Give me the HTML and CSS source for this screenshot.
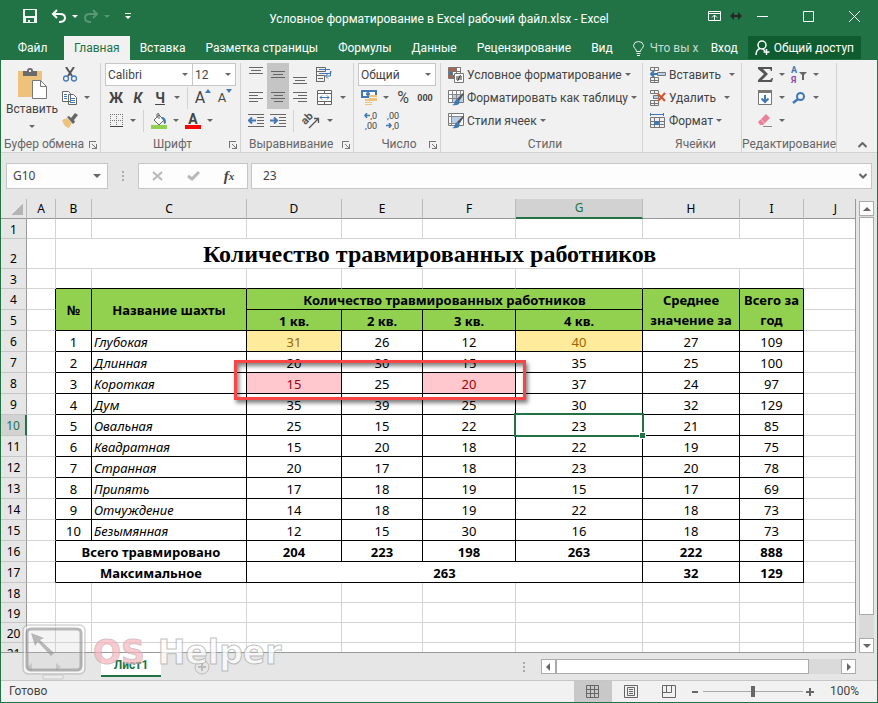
FILE: index.html
```html
<!DOCTYPE html>
<html lang="ru">
  <head>
    <meta charset="utf-8" />
    <title>Условное форматирование в Excel рабочий файл.xlsx - Excel</title>
    <link rel="stylesheet" href="styles.css">
  </head>
  <body>
    <div class="window">
      <header class="titlebar">
        <div class="quick">
          <button aria-label="Сохранить"><svg width="14" height="14"><path d="M0 0h14v14H0zM2 1v6h10V1zM3 9v4h2v-2h2v2h4V9z" fill="#f4f8f5" fill-rule="evenodd"/></svg></button>
          <button aria-label="Отменить"><svg width="16" height="14" fill="none" stroke="#fff" stroke-width="2"><path d="M2 5h7q5 0 5 4t-6 4M6 1L2 5l4 4"/></svg></button>
          <button class="arrow light" aria-label="Список отмены"></button>
          <button class="faded" aria-label="Вернуть"><svg width="16" height="14" fill="none" stroke="#fff" stroke-width="2"><path d="M14 5H7Q2 5 2 9t6 4M10 1l4 4-4 4"/></svg></button>
          <button class="arrow light faded" aria-label="Список возврата"></button>
          <button class="custom" aria-label="Настройка"><svg width="6" height="7" fill="#fff"><path d="M0 0h6v1H0zM0 3h6L3 6z"/></svg></button>
        </div>
        <h1>Условное форматирование в Excel рабочий файл.xlsx - Excel</h1>
        <div class="controls">
          <button class="small" aria-label="Параметры ленты"><svg width="13" height="10" fill="none" stroke="#fff"><path d="M.5.5h12v9H.5zM1 2.5h11M6.500 9V4M4 6.500L6.500 4 9 6.500"/></svg></button>
          <svg class="resize" width="12" height="8" fill="#262626"><path d="M0 4l4-4v3h4V0l4 4-4 4V5H4v3z"/></svg>
          <button aria-label="Свернуть"><svg width="11" height="11" stroke="#fff"><path d="M0 5.500h11"/></svg></button>
          <button aria-label="Развернуть"><svg width="11" height="11" stroke="#fff" fill="none"><path d="M.5.5h10v10H.5z"/></svg></button>
          <button aria-label="Закрыть"><svg width="11" height="11" stroke="#fff"><path d="M0 0l11 11M11 0L0 11"/></svg></button>
        </div>
      </header>

      <nav class="tabs">
        <a href="#file" class="file">Файл</a>
        <a href="#home" class="active">Главная</a>
        <a href="#insert">Вставка</a>
        <a href="#layout">Разметка страницы</a>
        <a href="#formulas">Формулы</a>
        <a href="#data">Данные</a>
        <a href="#review">Рецензирование</a>
        <a href="#view">Вид</a>
        <a href="#tell" class="tell"><svg width="11" height="15" fill="none" stroke="#e6f0ea"><path d="M3.500 10.500Q3.500 9 2 7.500Q.5 6 .5 4.500Q1 .5 5.500.5t5 4q0 1.500-1.500 3T7.500 10.500zM3.500 12.500h4M4 14.500h3"/></svg><span>Что вы х</span></a>
        <a href="#login" class="login">Вход</a>
        <button class="share"><svg width="15" height="16" fill="none" stroke="#fff" stroke-width="1.500"><circle cx="7" cy="5" r="4"/><path d="M1 15q0-5 4-6.500M8 9l2 2M11.500 9v6M8.500 12h6"/></svg>Общий доступ</button>
      </nav>

      <div class="ribbon">
        <section class="group clipboard">
          <div class="group-body">
            <button class="paste">
              <svg width="29" height="31"><path d="M0 3h24v26H0z" fill="#edc37c"/><path d="M5 3h4q0-3 3-3t3 3h4v5H5z" fill="#6b6b6b"/><path d="M11 2h2v2h-2z" fill="#f0f0f0"/><path d="M14.500 12.500h8l6 6v12h-14z" fill="#fff" stroke="#777"/><path d="M22.500 12.500v6h6" fill="none" stroke="#777"/></svg>
              Вставить
              <span class="arrow"></span>
            </button>
            <div class="rows">
              <div class="row"><button class="tool" aria-label="Вырезать"><svg width="14" height="15" fill="none"><path d="M3 0l6 9M11 0L5 9" stroke="#555" stroke-width="2"/><circle cx="3" cy="11.500" r="2.500" stroke="#3f78b5" stroke-width="1.300"/><circle cx="11" cy="11.500" r="2.500" stroke="#3f78b5" stroke-width="1.300"/></svg></button></div>
              <div class="row"><button class="tool" aria-label="Копировать"><svg width="16" height="14" fill="#fff" stroke="#666"><path d="M.5.5h6l2 2v8h-8zM6.500 3.500h5l3 3v7h-8z"/><path d="M2 3.500h3M2 5.500h3M2 7.500h3M8 7.500h5M8 9.500h5M8 11.500h5" stroke="#3f78b5"/></svg></button><button class="arrow" aria-label="Ещё"></button></div>
              <div class="row"><button class="tool" aria-label="Формат по образцу"><svg width="16" height="15"><path d="M0 7l5-2 5 5-3 5q-5-1-7-8z" fill="#edc37c"/><path d="M5 4l2-1 2 2 4-5 3 2-4 5 1 2-2 2z" fill="#666"/></svg></button></div>
            </div>
          </div>
          <footer>Буфер обмена<button class="launch" aria-label="Параметры буфера"></button></footer>
        </section>

        <section class="group font">
          <div class="group-body rows">
            <div class="row">
              <label class="combo wide"><select aria-label="Шрифт"><option>Calibri</option></select></label>
              <label class="combo size"><select aria-label="Размер шрифта"><option>12</option></select></label>
            </div>
            <div class="row">
              <button class="tool bold">Ж</button>
              <button class="tool bold italic">К</button>
              <button class="tool bold under">Ч</button>
              <button class="arrow" aria-label="Подчёркивание"></button>
              <i class="split"></i>
              <button class="tool grow">A<svg width="6" height="4"><path d="M0 4l3-4 3 4z" fill="#3f78b5"/></svg></button>
              <button class="tool shrink">A<svg width="6" height="4"><path d="M0 0h6L3 4z" fill="#3f78b5"/></svg></button>
            </div>
            <div class="row">
              <button class="tool" aria-label="Границы"><svg width="13" height="13" fill="none" stroke="#777" stroke-dasharray="1 1"><path d="M.5 0v12M6.500 0v12M12.500 0v12M0 .5h13M0 6.500h13"/><path d="M0 12.500h13" stroke="#444" stroke-dasharray="none"/></svg></button>
              <button class="arrow" aria-label="Виды границ"></button>
              <i class="split"></i>
              <button class="tool" aria-label="Цвет заливки"><svg width="16" height="16"><path d="M3 7l5-5 5 5-5 5z" fill="#fff" stroke="#666"/><path d="M6 5V1q1-1 2 0v5" fill="none" stroke="#666"/><path d="M11 4q4 0 4 6l-2 1q0-4-3-6z" fill="#3f78b5"/><path d="M0 12h16v4H0z" fill="#92d050"/></svg></button>
              <button class="arrow" aria-label="Цвета заливки"></button>
              <button class="tool color">А</button>
              <button class="arrow" aria-label="Цвета шрифта"></button>
            </div>
          </div>
          <footer>Шрифт<button class="launch" aria-label="Параметры шрифта"></button></footer>
        </section>

        <section class="group align">
          <div class="group-body rows">
            <div class="row">
              <button class="tool top" aria-label="По верхнему краю"><svg width="14" height="7" stroke="#666"><path d="M0 .5h14M2 3.500h10M0 6.500h14"/></svg></button>
              <button class="tool pressed" aria-label="По середине"><svg width="14" height="7" stroke="#666"><path d="M0 .5h14M2 3.500h10M0 6.500h14"/></svg></button>
              <button class="tool bottom" aria-label="По нижнему краю"><svg width="14" height="7" stroke="#666"><path d="M0 .5h14M2 3.500h10M0 6.500h14"/></svg></button>
              <button class="tool" aria-label="Перенос текста"><svg width="16" height="16" fill="none" stroke="#666"><path d="M.5 0v15M.5.5h9v4h-9M.5 8.500h8v6h-8M2 11.500h5"/><path d="M3 2.500h11M3 6.500h10q2.500 0 2-2.500M14.500 4v5h-5M12 6.500L9.500 9 12 11.500" stroke="#3f78b5"/></svg></button>
            </div>
            <div class="row">
              <button class="tool" aria-label="По левому краю"><svg width="14" height="12" stroke="#666"><path d="M0 .5h14M0 3.500h9M0 6.500h14M0 9.500h9"/></svg></button>
              <button class="tool pressed" aria-label="По центру"><svg width="14" height="12" stroke="#666"><path d="M0 .5h14M3 3.500h9M0 6.500h14M3 9.500h9"/></svg></button>
              <button class="tool" aria-label="По правому краю"><svg width="14" height="12" stroke="#666"><path d="M0 .5h14M5 3.500h9M0 6.500h14M5 9.500h9"/></svg></button>
              <button class="tool" aria-label="Объединить ячейки"><svg width="15" height="15" fill="#fff" stroke="#666"><path d="M.5.5h14v14H.5zM.5 3.500h14M.5 11.500h14M7.500 0v3M7.500 12v3"/><path d="M3 7.500h9M5 5.500l-2 2 2 2M10 5.500l2 2-2 2" stroke="#3f78b5" fill="none"/></svg></button>
              <button class="arrow" aria-label="Виды объединения"></button>
            </div>
            <div class="row">
              <button class="tool" aria-label="Уменьшить отступ"><svg width="16" height="13" stroke="#666"><path d="M0 .5h16M9 3.500h7M9 6.500h7M9 9.500h7M0 12.500h16"/><path d="M1 6.500h7M4 3.500l-3 3 3 3" stroke="#3f78b5" stroke-width="2" fill="none"/></svg></button>
              <button class="tool" aria-label="Увеличить отступ"><svg width="16" height="13" stroke="#666"><path d="M0 .5h16M9 3.500h7M9 6.500h7M9 9.500h7M0 12.500h16"/><path d="M0 6.500h7M4 3.500l3 3-3 3" stroke="#3f78b5" stroke-width="2" fill="none"/></svg></button>
              <i class="split"></i>
              <button class="tool" aria-label="Ориентация"><svg class="loose" width="17" height="16"><text class="ab" x="0" y="9" transform="rotate(-45 5 8)">ab</text><path d="M6 15l9-9M11 5.500h4.500V10" fill="none" stroke="#555" stroke-width="1.300"/></svg></button>
              <button class="arrow" aria-label="Виды ориентации"></button>
            </div>
          </div>
          <footer>Выравнивание<button class="launch" aria-label="Параметры выравнивания"></button></footer>
        </section>

        <section class="group number">
          <div class="group-body rows">
            <div class="row"><label class="combo format"><select aria-label="Числовой формат"><option>Общий</option></select></label></div>
            <div class="row">
              <button class="tool" aria-label="Финансовый формат"><svg width="17" height="16"><path d="M0 0h16v8H0z" fill="#3f78b5"/><path d="M2 2h12v4H2z" fill="#fff"/><circle cx="7" cy="4" r="2" fill="#3f78b5"/><path d="M8 5h8v6H8zM4 9h7v6H4z" fill="#edc37c"/><path d="M8 7.500h8M4 11.500h7M4 13.500h7" stroke="#f0f0f0"/></svg></button>
              <button class="arrow" aria-label="Валюты"></button>
              <button class="tool percent">%</button>
              <button class="tool zeros">000</button>
            </div>
            <div class="row digits">
              <button class="tool decimals"><span><svg width="6" height="5"><path d="M6 2.500H1M3 0L1 2.500 3 5" stroke="#3f78b5" fill="none" stroke-width="1.500"/></svg>,0</span><span>,00</span></button>
              <button class="tool decimals"><span>,00</span><span><svg width="6" height="5"><path d="M0 2.500h5M3 0l2 2.500L3 5" stroke="#3f78b5" fill="none" stroke-width="1.500"/></svg>,0</span></button>
            </div>
          </div>
          <footer>Число<button class="launch" aria-label="Параметры числа"></button></footer>
        </section>

        <section class="group styles">
          <div class="group-body rows">
            <div class="row"><button class="command"><svg width="16" height="16" stroke="#777"><path d="M.5.5h12v11H.5z" fill="#fff"/><path d="M1 1h7v3H1z" fill="#d35230" stroke="none"/><path d="M1 4h4v4H1z" fill="#3f78b5" stroke="none"/><path d="M1 8h5v3H1z" fill="#d35230" stroke="none"/><path d="M4.500 0v11M8.500 0v6M0 4.500h12"/><path d="M6.500 6.500h9v9h-9z" fill="#fff"/><path d="M8 10h6M8 12h6M12.500 8l-3 6" stroke="#333"/></svg>Условное форматирование<span class="arrow"></span></button></div>
            <div class="row"><button class="command"><svg width="16" height="16"><path d="M.5.5h15v12H.5z" fill="#fff" stroke="#777"/><path d="M4 4h11v8H4z" fill="#b9cfe8"/><path d="M4.500 0v13M8.500 0v13M12.500 0v7M0 4.500h15M0 8.500h13" stroke="#888"/><path d="M16 4l-5 7-2-2 6-6z" fill="#555"/><path d="M9 9q4 1 2 5-3 2-7 1 3-1 3-4z" fill="#3f78b5"/></svg>Форматировать как таблицу<span class="arrow"></span></button></div>
            <div class="row"><button class="command"><svg width="16" height="16"><path d="M.5.5h15v12H.5z" fill="#fff" stroke="#777"/><path d="M4 4h9v6H4z" fill="#b9cfe8"/><path d="M3.500 0v13M0 3.500h15M0 10.500h8" stroke="#888"/><path d="M16 4l-5 7-2-2 6-6z" fill="#555"/><path d="M9 9q4 1 2 5-3 2-7 1 3-1 3-4z" fill="#3f78b5"/></svg>Стили ячеек<span class="arrow"></span></button></div>
          </div>
          <footer>Стили</footer>
        </section>

        <section class="group cells">
          <div class="group-body rows">
            <div class="row"><button class="command"><svg width="16" height="16" fill="none" stroke="#777"><path d="M.5.500h8v3h-8zM4.500.5v3M.5 10.500h8v5h-8zM4.500 10v5M.5 13.500h8"/><path d="M7.500 5.500h8v3h-8z" fill="#b9cfe8"/><path d="M8 7H1M4 4L1 7l3 3" stroke="#3f78b5" stroke-width="2"/></svg>Вставить</button><button class="arrow far" aria-label="Варианты вставки"></button></div>
            <div class="row"><button class="command"><svg width="16" height="16" fill="none" stroke="#777"><path d="M.5.500h8v3h-8zM4.500.5v3M.5 10.500h8v5h-8zM4.500 10v5M.5 13.500h8"/><path d="M3.500 5.500h5v3h-5z" fill="#b9cfe8"/><path d="M8 4l7 7M15 3l-7 8" stroke="#d35230" stroke-width="2"/></svg>Удалить</button><button class="arrow far" aria-label="Варианты удаления"></button></div>
            <div class="row"><button class="command"><svg width="16" height="16" fill="none" stroke="#777"><path d="M.5 4.500h14v10H.5zM4.500 4v11M9.500 4v11M0 8.500h15M0 11.500h15"/><path d="M4 8h5v4H4z" fill="#3f78b5" stroke="none"/><path d="M1 1.500h12M.5 0v3M13.500 0v3" stroke="#3f78b5"/></svg>Формат<span class="arrow"></span></button></div>
          </div>
          <footer>Ячейки</footer>
        </section>

        <section class="group editing">
          <div class="group-body rows">
            <div class="row">
              <button class="tool" aria-label="Сумма"><svg width="15" height="15"><path d="M0 0h14v4h-1l-1-2H5l5 5-6 6h8l2-2h1l-1 4H0v-2l6-6-6-5z" fill="#555"/></svg></button><button class="arrow" aria-label="Функции"></button>
              <button class="tool" aria-label="Сортировка"><svg class="loose" width="16" height="17"><text class="az" x="0" y="7" fill="#3f78b5">А</text><text class="az" x="0" y="17" fill="#8a4fa8">Я</text><path d="M8 6h8l-3 3v5h-2V9z" fill="#666"/></svg></button><button class="arrow" aria-label="Виды сортировки"></button>
            </div>
            <div class="row">
              <button class="tool" aria-label="Заполнить"><svg width="15" height="15"><path d="M.5.5h13v14H.5z" fill="#fff" stroke="#777"/><path d="M0 0h14v3H0z" fill="#777"/><path d="M7 5v7M3.500 8.500L7 12l3.500-3.500" stroke="#3f78b5" stroke-width="2" fill="none"/></svg></button><button class="arrow" aria-label="Виды заполнения"></button>
              <button class="tool" aria-label="Найти"><svg width="14" height="12" fill="none" stroke="#3f78b5"><circle cx="8.500" cy="4.500" r="3.500" stroke-width="2"/><path d="M6 7l-5 4" stroke-width="2.500"/></svg></button><button class="arrow" aria-label="Виды поиска"></button>
            </div>
            <div class="row">
              <button class="tool" aria-label="Очистить"><svg width="15" height="13"><path d="M8 0l4 4-7 7H2L0 8z" fill="#e8829a"/><path d="M3 5l4 5" stroke="#f5c4ce"/><path d="M5 12.500h9" stroke="#888"/></svg></button><button class="arrow" aria-label="Виды очистки"></button>
            </div>
          </div>
          <footer>Редактирование</footer>
        </section>
        <button class="collapse" aria-label="Свернуть ленту"><svg width="9" height="6" fill="none" stroke="#666" stroke-width="2"><path d="M.5 5l4-4 4 4"/></svg></button>
      </div>

      <div class="formula-bar">
        <label class="name-box"><input type="text" value="G10" aria-label="Имя ячейки" /><span class="arrow"></span></label>
        <span class="grip"></span>
        <div class="fx">
          <button aria-label="Отмена"><svg width="11" height="10" stroke="#b8b8b8" stroke-width="2"><path d="M1 1l9 8M10 1L1 9"/></svg></button>
          <button aria-label="Ввод"><svg width="13" height="10" fill="none" stroke="#b8b8b8" stroke-width="3"><path d="M1 5l4 3 7-7"/></svg></button>
          <button class="fn">f<sub>x</sub></button>
        </div>
        <label class="formula"><input type="text" value="23" aria-label="Строка формул" /><svg width="8" height="6" fill="none" stroke="#666" stroke-width="2"><path d="M.5 1L4 4.500 7.500 1"/></svg></label>
      </div>

      <main class="workspace">
        <div class="sheet">
          <table>
            <colgroup><col class="c-row"><col class="c-a"><col class="c-b"><col class="c-c"><col class="c-d"><col class="c-e"><col class="c-f"><col class="c-g"><col class="c-h"><col class="c-i"><col></colgroup>
            <thead>
              <tr><th class="corner"></th><th>A</th><th>B</th><th>C</th><th>D</th><th>E</th><th>F</th><th class="current">G</th><th>H</th><th>I</th><th>J</th></tr>
            </thead>
            <tbody>
              <tr class="low"><th>1</th><td></td><td></td><td></td><td></td><td></td><td></td><td></td><td></td><td></td><td></td></tr>
              <tr class="title"><th>2</th><td></td><td colspan="8">Количество травмированных работников</td><td></td></tr>
              <tr class="low above"><th>3</th><td></td><td></td><td></td><td></td><td></td><td></td><td></td><td></td><td></td><td></td></tr>
            </tbody>
            <tbody class="data">
              <tr class="head"><th>4</th><td></td><td rowspan="2">№</td><td rowspan="2">Название шахты</td><td colspan="4">Количество травмированных работников</td><td rowspan="2">Среднее значение за</td><td rowspan="2">Всего за год</td><td></td></tr>
              <tr class="head"><th>5</th><td></td><td>1 кв.</td><td>2 кв.</td><td>3 кв.</td><td>4 кв.</td><td></td></tr>
              <tr><th>6</th><td></td><td>1</td><td class="name">Глубокая</td><td class="warn">31</td><td>26</td><td>12</td><td class="warn">40</td><td>27</td><td>109</td><td></td></tr>
              <tr><th>7</th><td></td><td>2</td><td class="name">Длинная</td><td>20</td><td>30</td><td>15</td><td>35</td><td>25</td><td>100</td><td></td></tr>
              <tr><th>8</th><td></td><td>3</td><td class="name">Короткая</td><td class="bad">15</td><td>25</td><td class="bad">20</td><td>37</td><td>24</td><td>97</td><td></td></tr>
              <tr><th>9</th><td></td><td>4</td><td class="name">Дум</td><td>35</td><td>39</td><td>25</td><td>30</td><td>32</td><td>129</td><td></td></tr>
              <tr><th class="current">10</th><td></td><td>5</td><td class="name">Овальная</td><td>25</td><td>15</td><td>22</td><td class="selected">23</td><td>21</td><td>85</td><td></td></tr>
              <tr><th>11</th><td></td><td>6</td><td class="name">Квадратная</td><td>15</td><td>20</td><td>18</td><td>22</td><td>19</td><td>75</td><td></td></tr>
              <tr><th>12</th><td></td><td>7</td><td class="name">Странная</td><td>20</td><td>17</td><td>18</td><td>23</td><td>20</td><td>78</td><td></td></tr>
              <tr><th>13</th><td></td><td>8</td><td class="name">Припять</td><td>17</td><td>18</td><td>19</td><td>15</td><td>17</td><td>69</td><td></td></tr>
              <tr><th>14</th><td></td><td>9</td><td class="name">Отчуждение</td><td>14</td><td>18</td><td>19</td><td>22</td><td>18</td><td>73</td><td></td></tr>
              <tr><th>15</th><td></td><td>10</td><td class="name">Безымянная</td><td>12</td><td>15</td><td>30</td><td>16</td><td>18</td><td>73</td><td></td></tr>
              <tr class="total"><th>16</th><td></td><td colspan="2">Всего травмировано</td><td>204</td><td>223</td><td>198</td><td>263</td><td>222</td><td>888</td><td></td></tr>
              <tr class="total"><th>17</th><td></td><td colspan="2">Максимальное</td><td colspan="4">263</td><td>32</td><td>129</td><td></td></tr>
            </tbody>
            <tbody>
              <tr class="low"><th>18</th><td></td><td></td><td></td><td></td><td></td><td></td><td></td><td></td><td></td><td></td></tr>
              <tr class="low"><th>19</th><td></td><td></td><td></td><td></td><td></td><td></td><td></td><td></td><td></td><td></td></tr>
              <tr class="low"><th>20</th><td></td><td></td><td></td><td></td><td></td><td></td><td></td><td></td><td></td><td></td></tr>
              <tr class="low"><th>21</th><td></td><td></td><td></td><td></td><td></td><td></td><td></td><td></td><td></td><td></td></tr>
            </tbody>
          </table>
          <div class="callout"></div>
        </div>
        <div class="vscroll">
          <button class="step up" aria-label="Вверх"></button>
          <div class="thumb"></div>
          <button class="step down" aria-label="Вниз"></button>
        </div>
      </main>

      <div class="sheet-bar">
        <button class="nav" aria-label="Предыдущий лист"><svg width="5" height="8" fill="#c6c6c6"><path d="M5 0v8L0 4z"/></svg></button>
        <button class="nav" aria-label="Следующий лист"><svg width="5" height="8" fill="#c6c6c6"><path d="M0 0v8l5-4z"/></svg></button>
        <a href="#sheet1" class="sheet-tab">Лист1</a>
        <button class="add" aria-label="Новый лист"><svg width="16" height="16" fill="none" stroke="#bbb"><circle cx="8" cy="8" r="7"/><path d="M4 8h8M8 4v8" stroke-width="2"/></svg></button>
        <span class="grip"></span>
        <div class="hscroll">
          <button class="step left" aria-label="Влево"></button>
          <div class="thumb"></div>
          <button class="step right" aria-label="Вправо"></button>
        </div>
      </div>

      <footer class="status">
        <span class="ready">Готово</span>
        <button class="view on" aria-label="Обычный"><svg width="13" height="13" fill="none" stroke="#666"><path d="M.5.5h12v12H.5zM4.500 0v13M8.500 0v13M0 4.500h13M0 8.500h13"/></svg></button>
        <button class="view" aria-label="Разметка страницы"><svg width="14" height="13" fill="none" stroke="#666"><path d="M.5.5h13v12H.5zM3.500 2.500h7v8h-7zM5 4.500h4M5 6.500h4M5 8.500h4"/></svg></button>
        <button class="view" aria-label="Страничный режим"><svg width="14" height="13" fill="none" stroke="#666"><path d="M.5.5h13v12H.5zM4.500 0v7.500M9.500 0v7.500M0 7.500h9.500"/></svg></button>
        <button class="zoom-step" aria-label="Уменьшить"><svg width="8" height="8" stroke="#666" stroke-width="2"><path d="M1 4h6"/></svg></button>
        <input type="range" min="0" max="100" value="50" aria-label="Масштаб" />
        <button class="zoom-step" aria-label="Увеличить"><svg width="8" height="8" stroke="#666" stroke-width="2"><path d="M0 4h8M4 0v8"/></svg></button>
        <span class="percent-value">100%</span>
      </footer>

      <div class="watermark">
        <svg width="66" height="58" fill="none"><rect x="2" y="2" width="62" height="49" rx="5" fill="#ccc" fill-opacity=".3" stroke="#aaa"/><rect x="4" y="4" width="58" height="45" rx="4" stroke="#fff" stroke-width="2"/><rect x="6" y="6" width="54" height="41" rx="4" stroke="#999" stroke-width="3"/><path d="M10 10l13 5-4 2 14 13-3 3-13-14-3 4z" fill="#999"/><path d="M22 52h20v4H22z" fill="#eee" stroke="#bbb"/></svg>
        <span class="os">OS</span><span class="helper">Helper</span>
      </div>
    </div>
  </body>
</html>
```
FILE: styles.css
```css
* {
  box-sizing: border-box;
}
body {
  margin: 0;
  font-family: Roboto, "Noto Sans", sans-serif;
  font-size: 12px;
  line-height: 16px;
  color: #444;
}
button,
input,
select {
  font: inherit;
  color: inherit;
  background: none;
  border: none;
  border-radius: 0;
  padding: 0;
  margin: 0;
}
button {
  display: flex;
  align-items: center;
  justify-content: center;
  white-space: nowrap;
}
a {
  color: inherit;
  text-decoration: none;
}
svg {
  display: block;
  flex: none;
}
.loose {
  overflow: visible;
}
.window {
  position: relative;
  display: flex;
  flex-direction: column;
  height: 100vh;
  border: 1px solid #217346;
  border-top: none;
  background: #e6e6e6;
  overflow: hidden;
}

/* title bar */
.titlebar {
  display: grid;
  grid-template-columns: 1fr auto 1fr;
  height: 36px;
  background: #217346;
  color: #fff;
}
.titlebar h1 {
  margin: 0;
  padding-top: 3px;
  font-size: 12px;
  font-weight: normal;
  line-height: 33px;
  white-space: nowrap;
}
.quick {
  display: flex;
  align-items: center;
  padding-left: 22px;
  padding-bottom: 4px;
}
.quick button:nth-child(2) {
  margin-left: 14px;
}
.quick .custom {
  margin-left: 10px;
  width: 6px;
}
.faded {
  opacity: 0.25;
}
.controls {
  display: flex;
  justify-content: flex-end;
  padding-bottom: 4px;
}
.controls button {
  width: 46px;
}
.controls .small {
  width: 22px;
}
.resize {
  align-self: center;
  margin: 0 -3px 0 5px;
}

/* drop-down triangle */
.arrow {
  width: 16px;
  height: 16px;
  flex: none;
  display: flex;
  align-items: center;
  justify-content: center;
}
.arrow::after,
.combo::after {
  content: "";
  border: 3px solid transparent;
  border-top-color: #666;
  border-bottom: none;
}
.arrow.light::after {
  border-top-color: #fff;
}

.tabs {
  display: flex;
  height: 24px;
  background: #217346;
  color: #fff;
  line-height: 24px;
  white-space: nowrap;
  padding-right: 16px;
}
.tabs a {
  flex: none;
  padding: 0 10px;
}
.tabs .file {
  width: 63px;
  padding: 0;
  text-align: center;
}
.tabs .active {
  background: #f1f1f1;
  color: #217346;
}
.tabs .tell {
  display: flex;
  gap: 6px;
  flex: 1;
  align-items: center;
  padding-right: 0;
  color: #c7dccf;
}
.tabs .share {
  gap: 4px;
  padding: 0 7px;
  height: 23px;
  background: #0e5c2f;
}

/* ribbon */
.ribbon {
  display: flex;
  height: 93px;
  padding-top: 3px;
  background: #f1f1f1;
  border-bottom: 1px solid #d2d2d2;
}
.group {
  border-right: 1px solid #d2d2d2;
}
.group-body {
  height: 72px;
}
.group footer {
  display: flex;
  justify-content: center;
  align-items: center;
  height: 17px;
  position: relative;
  color: #666;
  white-space: nowrap;
}
.launch {
  position: absolute;
  right: 4px;
  bottom: 4px;
  width: 7px;
  height: 7px;
  border: 1px solid #777;
  border-right: none;
  border-bottom: none;
}
.launch::after {
  content: "";
  width: 4px;
  height: 4px;
  flex: none;
  margin: 3px 0 0 3px;
  border: 1px solid #777;
  border-left: none;
  border-top: none;
  background: linear-gradient(45deg, transparent 40%, #777 40% 60%, transparent 60%);
}
.row {
  display: flex;
  align-items: center;
  height: 23px;
}
.tool {
  width: 22px;
  height: 23px;
  flex: none;
}
.row .arrow {
  width: 12px;
}
.split {
  width: 1px;
  height: 22px;
  margin: 0 4px;
  background: #d2d2d2;
}
.command {
  gap: 3px;
}
.command .arrow {
  width: 6px;
}
.clipboard {
  width: 100px;
}
.clipboard .group-body {
  display: flex;
}
.clipboard footer {
  justify-content: flex-start;
  padding-left: 3px;
}
.paste {
  width: 58px;
  flex-direction: column;
  justify-content: flex-start;
  padding: 5px 0 0 4px;
  gap: 1px;
}
.paste svg {
  margin-bottom: 1px;
}
.font {
  width: 140px;
  padding-left: 4px;
}
.combo {
  position: relative;
  display: block;
  height: 23px;
  border: 1px solid #c6c6c6;
  background: #fff;
}
.combo select {
  width: 100%;
  height: 21px;
  padding-left: 2px;
  appearance: none;
}
.combo::after {
  position: absolute;
  right: 4px;
  top: 9px;
}
.wide {
  width: 88px;
}
.size {
  width: 43px;
  border-left: none;
}
.format {
  width: 78px;
}
.bold {
  font-weight: bold;
  font-size: 14px;
}
.italic {
  font-style: italic;
}
.under {
  text-decoration: underline;
}
.grow,
.shrink {
  font-size: 16px;
}
.shrink {
  font-size: 13px;
}
.grow svg,
.shrink svg {
  align-self: flex-start;
  margin-top: 3px;
}
.color {
  width: 16px;
  height: 16px;
  margin: 0 3px;
  font-size: 14px;
  font-weight: bold;
  line-height: 12px;
  border-bottom: 4px solid #f00;
}
.align {
  width: 113px;
  padding-left: 4px;
}
.align .row .tool:nth-child(4) {
  width: 26px;
}
.align .top {
  align-items: flex-start;
  padding-top: 4px;
}
.align .bottom {
  align-items: flex-end;
  padding-bottom: 2px;
}
.align footer {
  justify-content: flex-start;
  padding-left: 4px;
}
.pressed {
  background: #c5c5c5;
}
.ab {
  font-size: 11px;
  font-weight: bold;
  fill: #555;
}
.az {
  font-size: 9px;
  font-weight: bold;
}
.number {
  width: 87px;
  padding-left: 4px;
}
.percent {
  font-size: 16px;
}
.zeros {
  font-size: 9px;
  font-weight: bold;
}
.decimals {
  flex-direction: column;
  align-items: flex-end;
  font-size: 9px;
  line-height: 10px;
  padding-right: 3px;
}
.decimals span {
  display: flex;
  align-items: center;
}
.styles {
  width: 202px;
  padding-left: 7px;
}
.cells {
  width: 99px;
  padding-left: 7px;
}
.row .far {
  margin-left: 5px;
}
.editing {
  width: 95px;
  padding-left: 12px;
}
.editing footer {
  margin-left: -12px;
}
.collapse {
  margin: auto 10px 4px auto;
}

/* formula bar */
.formula-bar {
  display: flex;
  height: 46px;
  padding: 10px 5px;
}
.formula-bar label,
.fx {
  display: flex;
  align-items: center;
  border: 1px solid #c6c6c6;
  background: #fdfdfd;
}
.formula-bar input {
  flex: 1;
  min-width: 0;
  padding-left: 6px;
  font-family: "Noto Sans", sans-serif;
}
.name-box {
  width: 102px;
}
.name-box .arrow {
  width: 20px;
}
.name-box .arrow::after {
  border-width: 4px 4px 0;
}
.grip {
  width: 2px;
  height: 10px;
  align-self: center;
  background: repeating-linear-gradient(#aaa 0 2px, transparent 2px 4px);
}
.formula-bar .grip {
  margin: 0 14px;
}
.fx {
  width: 110px;
  justify-content: space-around;
}
.fx button {
  width: 32px;
}
.fn {
  font: italic bold 15px "Liberation Serif", serif;
}
.fn sub {
  font-size: 11px;
}
.formula-bar .formula {
  flex: 1;
  margin-left: 3px;
  padding-right: 4px;
}
.formula input {
  padding-left: 11px;
}

/* worksheet */
.workspace {
  display: flex;
  flex: 1;
  min-height: 0;
}
.sheet {
  position: relative;
  flex: 1;
  min-width: 0;
  overflow: hidden;
  border-right: 1px solid #999;
  border-bottom: 1px solid #999;
  background: #fff;
}
table {
  width: calc(100% + 13px);
  table-layout: fixed;
  border-collapse: separate;
  border-spacing: 0;
  font-family: "Noto Sans", sans-serif;
  color: #000;
}
.c-row { width: 26px; }
.c-a { width: 29px; }
.c-b { width: 36px; }
.c-c { width: 155px; }
.c-d { width: 95px; }
.c-e { width: 81px; }
.c-f { width: 93px; }
.c-g { width: 127px; }
.c-h { width: 97px; }
.c-i { width: 64px; }
th,
td {
  height: 21px;
  padding: 2px 0 0;
  line-height: 18px;
  border: 0 solid #d4d4d4;
  border-width: 0 1px 1px 0;
  text-align: center;
  font-size: 13px;
}
th {
  font-weight: normal;
  font-size: 12px;
  background: #e6e6e6;
  vertical-align: bottom;
  border-color: #999;
}
tbody th {
  border-bottom-color: #c6c6c6;
}
thead th {
  height: 20px;
  padding: 0;
  line-height: 19px;
  border-right-color: #bbb;
}
.low th,
.low td {
  height: 20px;
  line-height: 17px;
}
.corner {
  background: linear-gradient(135deg, transparent 50%, #b4b4b4 50%) 11px 4px / 11px 12px no-repeat #e6e6e6;
}
th.current {
  background: #d2d2d2;
  color: #217346;
}
thead .current {
  line-height: 18px;
  border-bottom: 2px solid #217346;
}
tbody .current {
  border-right: 2px solid #217346;
}
.title td {
  height: 30px;
  padding: 0;
  line-height: 28px;
  font-family: "Liberation Serif", serif;
  font-size: 24px;
  font-weight: bold;
  white-space: nowrap;
}
.above td:nth-child(n + 3):nth-last-child(n + 2) {
  border-bottom-color: #000;
}
.data td:not(:last-child) {
  border-right-color: #000;
}
.data td:not(:nth-child(2)):not(:last-child) {
  border-bottom-color: #000;
}
.head td:not(:nth-child(2)):not(:last-child) {
  background: #92d050;
  font-weight: bold;
}
.head td[rowspan] {
  padding: 0;
  line-height: 20px;
}
.total td {
  font-weight: bold;
}
.data .name {
  padding-left: 2px;
  text-align: left;
  font-style: italic;
}
.warn {
  background: #ffeb9c;
  color: #9c6500;
}
.bad {
  background: #ffc7ce;
  color: #9c0006;
}
.selected {
  position: relative;
}
.selected::before {
  content: "";
  position: absolute;
  inset: -2px;
  border: 2px solid #217346;
}
.selected::after {
  content: "";
  position: absolute;
  right: -3px;
  bottom: -3px;
  width: 5px;
  height: 5px;
  background: #217346;
  outline: 1px solid #fff;
}
.callout {
  position: absolute;
  left: 233px;
  top: 161px;
  width: 292px;
  height: 40px;
  border: 3px solid #f84545;
  box-shadow: 2px 3px 4px rgba(0, 0, 0, 0.5), inset 2px 3px 4px rgba(0, 0, 0, 0.5);
}

/* scroll bars */
.vscroll {
  display: flex;
  flex-direction: column;
  width: 15px;
  margin: 2px 3px 0;
  background: #dadada;
}
.step {
  width: 15px;
  height: 15px;
  flex: none;
  border: 1px solid #ababab;
  background: #fff;
}
.step::after {
  content: "";
  border: 4px solid transparent;
}
.up::after { border-bottom-color: #666; border-top: none; }
.down::after { border-top-color: #666; border-bottom: none; }
.left::after { border-right-color: #666; border-left: none; }
.right::after { border-left-color: #666; border-right: none; }
.thumb {
  border: 1px solid #ababab;
  background: #fff;
}
.vscroll .thumb {
  flex: 1;
  margin: 1px 0 23px;
}
.sheet-bar {
  display: flex;
  height: 27px;
  padding: 0 21px 0 26px;
}
.nav {
  width: 5px;
  margin-right: 24px;
}
.sheet-tab {
  width: 60px;
  height: 24px;
  margin-left: 16px;
  background: #fff;
  border-bottom: 2px solid #217346;
  color: #217346;
  font-weight: bold;
  line-height: 24px;
  text-align: center;
}
.add {
  margin-left: 33px;
}
.sheet-bar .grip {
  margin: 0 16px 0 auto;
}
.hscroll {
  display: flex;
  width: 38%;
  height: 15px;
  margin-top: 6px;
  background: #dadada;
}
.hscroll .thumb {
  flex: 1;
  margin-right: 32px;
}

/* status bar */
.status {
  display: flex;
  align-items: center;
  height: 22px;
  flex: none;
  padding: 0 18px 0 8px;
  background: #f1f1f1;
  border-top: 1px solid #c6c6c6;
}
.status span {
  padding-bottom: 2px;
}
.ready {
  margin-right: auto;
}
.status .view {
  width: 38px;
  height: 21px;
}
.status .on {
  background: #c8c8c8;
}
.zoom-step {
  width: 15px;
  height: 21px;
}
.status input {
  width: 100px;
  height: 21px;
  appearance: none;
  background: linear-gradient(#aaa, #aaa) center / 100% 1px no-repeat;
}
.status input::-webkit-slider-thumb {
  appearance: none;
  width: 4px;
  height: 11px;
  background: #666;
}
.percent-value {
  margin-left: 12px;
}

/* logo over the lower left corner */
.watermark {
  position: absolute;
  left: 20px;
  bottom: 21px;
  display: flex;
  align-items: center;
  font: bold 33px "DejaVu Sans", sans-serif;
  opacity: 0.7;
  pointer-events: none;
}
.os {
  margin-left: 6px;
  color: #f9b4bd;
  -webkit-text-stroke: 1px #c9a9ae;
}
.helper {
  margin-left: 13px;
  color: #fff;
  -webkit-text-stroke: 1px #aaa;
}
```
